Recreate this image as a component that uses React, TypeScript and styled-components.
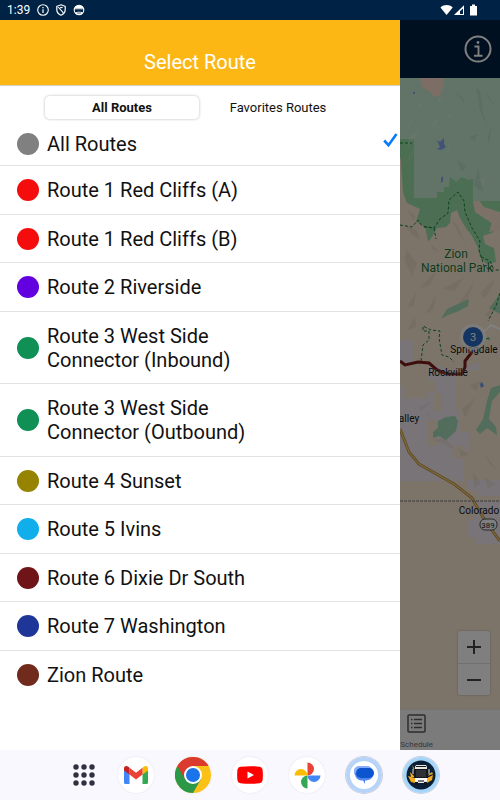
import React, { useState } from "react";
import styled, { createGlobalStyle } from "styled-components";

const Global = createGlobalStyle`
  *, *::before, *::after { box-sizing: border-box; }
  body { margin: 0; background: #faf8ff; font-family: Roboto, "Liberation Sans", sans-serif; color: #111; }
  button { font: inherit; color: inherit; border: 0; padding: 0; margin: 0; background: none; cursor: pointer; }
  svg { display: block; }
`;

const Phone = styled.div`
  display: flex;
  flex-direction: column;
  min-height: 100vh;
`;

const StatusBar = styled.header`
  display: flex;
  align-items: center;
  gap: 7px;
  height: 20px;
  padding: 0 22px 0 7px;
  background: #002345;
  color: #fff;
  font-size: 12px;
  line-height: 20px;
`;

const StatusRight = styled.div`
  display: flex;
  align-items: center;
  margin-left: auto;
`;

const Stage = styled.main`
  flex: 1;
  display: grid;
  grid-template: minmax(0, 1fr) / minmax(0, 1fr);
  & > * { grid-area: 1 / 1; }
`;

const MapScreen = styled.section`
  display: flex;
  flex-direction: column;
`;

const MapHeader = styled.div`
  display: flex;
  align-items: center;
  justify-content: flex-end;
  height: 58px;
  padding-right: 8px;
  background: #002040;
  color: #fff;
`;

const MapArea = styled.div`
  position: relative;
  flex: 1;
  background: #f9e9d4;
`;

const MapDrawing = styled.svg`
  position: absolute;
  inset: 0;
  width: 100%;
  height: 100%;
`;

const ZoomControl = styled.div`
  position: absolute;
  right: 10px;
  bottom: 14px;
  display: flex;
  flex-direction: column;
  width: 32px;
  border-radius: 2px;
  background: #fff;
  box-shadow: 0 0 2px rgba(0, 0, 0, 0.3);
`;

const ZoomButton = styled.button`
  display: grid;
  place-items: center;
  height: 32px;
  & + & { border-top: 1px solid #e0e0e0; }
`;

const TabBar = styled.nav`
  display: grid;
  grid-template-columns: repeat(3, 1fr);
  height: 41px;
  background: #f6f6f6;
  border-top: 1px solid #e4e4e4;
`;

const TabButton = styled.button`
  grid-column: 3;
  display: flex;
  flex-direction: column;
  align-items: center;
  justify-content: space-between;
  padding-top: 4px;
  color: #707070;
  font-size: 8px;
  line-height: 11px;
`;

const Scrim = styled.div`
  z-index: 1;
  background: rgba(0, 0, 0, 0.5);
`;

const Drawer = styled.aside`
  z-index: 2;
  width: 80%;
  background: #fff;
`;

const DrawerHeader = styled.div`
  display: flex;
  align-items: flex-end;
  justify-content: center;
  height: 66px;
  padding-bottom: 11px;
  background: #fdb714;
  border-bottom: 1px solid #d8d0c4;
`;

const Title = styled.h1`
  margin: 0;
  color: #fff;
  font-size: 20px;
  font-weight: 400;
  line-height: 24px;
`;

const Segments = styled.div`
  display: grid;
  grid-template-columns: 1fr 1fr;
  padding: 9px 44px 0;
`;

const Segment = styled.button<{ $active: boolean }>`
  height: 25px;
  border-radius: 6px;
  font-size: 13px;
  font-weight: ${(p) => (p.$active ? 700 : 400)};
  box-shadow: ${(p) => (p.$active ? "inset 0 0 0 1px #e6e6e6, 0 0 2px rgba(0, 0, 0, 0.16)" : "none")};
`;

const RouteList = styled.ul`
  list-style: none;
  margin: 0;
  padding: 0;
`;

const RouteItem = styled.li`
  border-bottom: 1px solid #e2e2e2;
  &:last-child { border-bottom: 0; }
`;

const RouteButton = styled.button`
  display: flex;
  align-items: center;
  gap: 8px;
  width: 100%;
  padding: 12px 2px 12px 17px;
  text-align: left;
  font-size: 20px;
  line-height: 24px;
  ${RouteItem}:nth-child(odd) & { padding-bottom: 11px; }
  ${RouteItem}:first-child & { padding-bottom: 9px; }
`;

const Dot = styled.span<{ $color: string }>`
  flex: none;
  width: 22px;
  height: 22px;
  border-radius: 50%;
  background: ${(p) => p.$color};
`;

const RouteName = styled.span`
  max-width: 220px;
`;

const CheckIcon = styled.svg`
  align-self: flex-start;
  margin-left: auto;
`;

const Dock = styled.nav`
  display: flex;
  align-items: center;
  justify-content: center;
  gap: 21px;
  height: 50px;
  padding-left: 10px;
  background: #faf8ff;
`;

const DockButton = styled.button<{ $ring?: string; $plain?: boolean }>`
  display: grid;
  place-items: center;
  flex: none;
  width: ${(p) => (p.$plain ? 26 : 36)}px;
  height: 36px;
  border-radius: 50%;
  background: ${(p) => (p.$plain ? "none" : "#fff")};
  box-shadow: ${(p) =>
    p.$ring
      ? `inset 0 0 0 4px ${p.$ring}, 0 0 0 1px #c9cdd8`
      : p.$plain
        ? "none"
        : "0 0 2px rgba(60, 50, 80, 0.14)"};
`;

const routes = [
  { name: "All Routes", color: "#808080" },
  { name: "Route 1 Red Cliffs (A)", color: "#f50c0c" },
  { name: "Route 1 Red Cliffs (B)", color: "#f50c0c" },
  { name: "Route 2 Riverside", color: "#6200e0" },
  { name: "Route 3 West Side Connector (Inbound)", color: "#109055" },
  { name: "Route 3 West Side Connector (Outbound)", color: "#109055" },
  { name: "Route 4 Sunset", color: "#968300" },
  { name: "Route 5 Ivins", color: "#10aeea" },
  { name: "Route 6 Dixie Dr South", color: "#701517" },
  { name: "Route 7 Washington", color: "#1f3699" },
  { name: "Zion Route", color: "#702b1d" },
];

const RegionMap = () => (
  <MapDrawing viewBox="0 78 500 631" preserveAspectRatio="xMaxYMin slice" role="img" aria-label="Map">
    <rect x="0" y="78" width="500" height="631" fill="#f8e8d2" />
    <path
      d="M400 386H404V398H428V392H435V380H428V368L440 366 452 371 480 362V370H455V410H460V432H470V460H464V480H500V496H478V490H468V481H400Z M400 340H414V362H400Z M476 520H468V537H476V544H500V501H476Z"
      fill="#f1e9f1"
    />
    <path d="M434 393H442V411H434Z M428 420H438V446H428Z M452 446H465V452H469V459H453Z" fill="#f8e8d2" />
    <path
      d="M400 78H500V212L489 210 482 214 474 210 475 204 480 202 478 198 473 199 474 208 484 215 493 220 490 228 494 232 483 236 485 244 494 248 496 262 487 264 480 257 478 248 472 236 466 228 460 218 457 210 451 213 450 223 446 227 437 228 430 240 428 241 425 226 416 222 420 209 407 203 403 192 401 160 400 157Z"
      fill="#98dca6"
    />
    <path d="M478 199 484 207 494 210 500 214V230L489 232 493 224 484 218 475 212 474 205Z" fill="#f8e2cf" />
    <path
      d="M400 78H500V201H473V179L468 180 462 177 456 182 450 177 449 187H444V192H437V198H414V139H400Z"
      fill="#c2e8cf"
    />
    <path d="M420 78H443V87L440 96 435 97 430 92 422 87Z" fill="#f8dbcb" />
    <path d="M437 140 440 142 444 138 444 144 446 147 441 150 437 149 440 147Z M441 178 443 176 443 181 441 183Z M413 92H415V94H413Z" fill="#84a4ef" />
    <g fill="#8fb7a2" fillOpacity="0.25">
      <path d="M468 78 476 87 480 110 488 128 483 113 480 91Z M470 137 477 134 475 141Z M478 168 483 192 474 186Z M485 92 496 106 490 100Z M455 92 462 97 466 105Z M488 136 492 124 489 144Z M457 160 466 166 462 172Z" />
    </g>
    <g fill="#fff" fillOpacity="0.18">
      <path d="M431 126 438 117 438 121 433 127Z M448 116 453 110 450 119Z M407 129 411 119 412 124Z M418 106 423 101 421 108Z M409 137 420 130 416 137 408 147Z M445 153 451 144 449 151Z M476 180 487 176 484 185Z M402 167 416 146 410 158Z M438 96 443 105 438 102Z" />
    </g>
    <g fill="#d6c2aa" fillOpacity="0.28">
      <path d="M452 220 458 226 466 244 459 235Z M408 210 416 216 413 220Z M405 225 417 230 420 240 411 234Z" />
      <path d="M407 250 417 263 412 277 404 259Z M431 244 440 252 433 250Z M419 289 438 268 430 285Z M443 289 464 277 455 291Z M454 310 475 281 466 302Z M407 307 416 292 414 306Z M480 293 496 278 485 299Z M425 314 437 294 433 310Z M485 315 498 300 490 318Z M407 330 415 316 416 327Z" />
      <path d="M419 407 432 401 421 411Z M428 413 433 418 428 416Z M462 409 476 397 465 418Z M433 440 445 438 455 450 442 443Z M458 448 470 455 461 457Z M473 473 481 483 474 488Z M484 453 498 472 490 464Z M485 477 496 484 488 489Z M470 385 481 381 476 392Z" />
    </g>
    <path
      d="M500 293 494 302 489 308 500 314Z M441 319 447 309 460 303 469 299 468 306 459 311 448 315Z M433 432 438 428 438 421 446 417 455 416 458 421 456 431 446 440 439 436 433 438Z M500 385 491 388 487 401 483 419 476 430 480 434 487 428 497 435 496 427 489 419 492 401 500 392Z M487 338 491 338 489 341Z"
      fill="#a6dab8"
    />
    <g fill="none" stroke="#1b8537" strokeWidth="1" strokeDasharray="3 2">
      <path d="M400 143H412" />
      <path d="M400 225 412 227 418 220 422 226 434 228 440 219 448 213 449 200 458 192 464 201 465 212 472 228 480 241 479 250 484 266 490 270H500" />
      <path d="M424 227 434 228 436 239" />
      <path d="M421 361 423 345 429 340 429 331 423 331 423 326 431 330 440 331 439 338 442 355 449 357 454 362" />
      <path d="M500 293 496 306 488 321M481 257 490 261 494 270M489 338 486 339" />
    </g>
    <path d="M483 332 487 329 491 325 500 329" fill="none" stroke="#fff" strokeWidth="2" />
    <path d="M400 361 405 365 418 362 429 363 437 370 447 374 462 374 465 367 465 361 472 352" fill="none" stroke="#7b1d1a" strokeWidth="3" />
    <path d="M400 429 409 452 419 464 454 484 472 498 481 514 491 529 500 541" fill="none" stroke="#c89a48" strokeWidth="3" />
    <path d="M400 429 409 452 419 464 454 484 472 498 481 514 491 529 500 541" fill="none" stroke="#ffdf90" strokeWidth="1" />
    <path d="M400 501H500" stroke="#777" strokeWidth="1" strokeDasharray="3 1" />
    <path d="M480 384 482 382 484 386 481 388Z" fill="#639af0" />
    <g fontFamily="Roboto, sans-serif" textAnchor="middle" paintOrder="stroke" stroke="#fff" strokeOpacity="0.4" strokeWidth="1">
      <g fontSize="12" fill="#1c7733">
        <text x="456" y="258">Zion</text>
        <text x="457" y="272">National Park</text>
      </g>
      <g fontSize="10" fill="#101010">
        <text x="474" y="353">Springdale</text>
        <text x="448" y="376">Rockville</text>
        <text x="409" y="422">alley</text>
        <text x="479" y="514">Colorado</text>
      </g>
    </g>
    <circle cx="473" cy="337" r="13" fill="#fff" fillOpacity="0.7" />
    <circle cx="473" cy="337" r="10" fill="#286bc4" />
    <text x="473" y="341" fontFamily="Roboto, sans-serif" fontSize="11" fill="#fff" textAnchor="middle">3</text>
    <rect x="480" y="519" width="17" height="11" rx="5" fill="#fff" stroke="#555" />
    <text x="488" y="528" fontFamily="Roboto, sans-serif" fontSize="8" fill="#222" textAnchor="middle">389</text>
  </MapDrawing>
);

const StatusIcons = () => (
  <>
    <svg width="12" height="12" viewBox="0 0 12 12" fill="none" stroke="#fff">
      <circle cx="6" cy="6" r="5.3" strokeWidth="1.1" />
      <path d="M6 5.2V9M6 3V4.2" strokeWidth="1.2" />
    </svg>
    <svg width="10" height="12" viewBox="0 0 10 12" fill="none" stroke="#fff">
      <path d="M5 .8 9.2 2.3V5.6C9.2 8.2 7.5 10.3 5 11.3 2.5 10.3.8 8.2.8 5.6V2.3Z" strokeWidth="1.2" />
      <path d="M2.2 3 7.4 8.8M6.6 3.4 4 3.8" strokeWidth="1.1" />
    </svg>
    <svg width="12" height="12" viewBox="0 0 12 12">
      <circle cx="6" cy="6" r="4.8" fill="none" stroke="#fff" strokeWidth="1.1" />
      <path d="M1.5 4.6C2.4.2 9.6.2 10.500 4.600Z" fill="#fff" />
      <path d="M.8 4.400H11.200V5.300H.8Z M2.200 8.400C4 7.400 8 7.400 9.800 8.400 8 12 4 12 2.200 8.400Z" fill="#fff" />
      <path d="M4 9H8" stroke="#002345" strokeWidth=".7" />
    </svg>
  </>
);

const SignalIcons = () => (
  <svg width="38" height="14" viewBox="0 0 38 14">
    <path d="M.5 4.400C4 1.200 9.200 1.200 12.700 4.400L6.600 12Z" fill="#fff" />
    <path d="M24 2.200V12H14Z" fill="#fff" />
    <path d="M23 5.400V11H20V8.300Z" fill="#002345" />
    <path d="M30 3H32V1.500H35V3H37V12.500H30Z" fill="#fff" />
  </svg>
);

const InfoIcon = () => (
  <svg width="28" height="28" viewBox="0 0 28 28" fill="none" stroke="currentColor">
    <circle cx="14" cy="14" r="12.5" strokeWidth="2" />
    <path d="M10.5 11.5H14.5V20.5M10 20.7H18.5" strokeWidth="1.9" />
    <circle cx="14" cy="7.5" r="1.4" fill="currentColor" stroke="none" />
  </svg>
);

const ScheduleIcon = () => (
  <svg width="19" height="19" viewBox="0 0 19 19" fill="none" stroke="#5a5a5a">
    <rect x="1" y="1" width="17" height="17" rx="1" strokeWidth="1.5" />
    <path d="M7 5.5H15M7 9.5H15M7 13.5H15M4 5.5H5.5M4 9.5H5.5M4 13.5H5.5" strokeWidth="1.3" />
  </svg>
);

const AppsIcon = () => (
  <svg width="24" height="24" viewBox="0 0 24 24" fill="#303040">
    {[4, 12, 20].map((y) => [4, 12, 20].map((x) => <circle key={`${x}-${y}`} cx={x} cy={y} r="2.7" />))}
  </svg>
);

const MailIcon = () => (
  <svg width="26" height="20" viewBox="0 0 26 20">
    <path d="M1 5V17.5Q1 19 2.5 19H6.5V8Z" fill="#4285f4" />
    <path d="M25 5V17.5Q25 19 23.5 19H19.5V8Z" fill="#34a853" />
    <path d="M19.5 2.8V9.5L25 5.5V3.5C25 1 22.5.4 21 1.6Z" fill="#fbbc04" />
    <path d="M6.5 2.8 13 7.7 19.5 2.8V9.5L13 14.5 6.5 9.5Z" fill="#ea4335" />
    <path d="M1 3.5V5.5L6.5 9.5V2.8L5 1.6C3.5.4 1 1 1 3.5Z" fill="#c5221f" />
  </svg>
);

const ChromeIcon = () => (
  <svg width="36" height="36" viewBox="0 0 36 36">
    <circle cx="18" cy="18" r="18" fill="#fbc116" />
    <path d="M18 18 25.8 22.5 18 36A18 18 0 0 1 2.4 9Z" fill="#2b9847" />
    <path d="M18 9H33.6A18 18 0 0 0 2.4 9L10.2 22.5Z" fill="#db3b2e" />
    <circle cx="18" cy="18" r="9" fill="#fff" />
    <circle cx="18" cy="18" r="7" fill="#1a73e8" />
  </svg>
);

const VideoIcon = () => (
  <svg width="26" height="18" viewBox="0 0 26 18">
    <path d="M3.5.7Q13-.4 22.5.7 25 1 25.5 3.5 26.3 9 25.5 14.5 25 17 22.5 17.3 13 18.4 3.5 17.3 1 17 .5 14.5-.3 9 .5 3.5 1 1 3.5.7Z" fill="#f00" />
    <path d="M10.500 5.500 17 9 10.500 12.500Z" fill="#fff" />
  </svg>
);

const PhotosIcon = () => (
  <svg width="27" height="27" viewBox="0 0 27 27">
    <path d="M13.5.5A6.5 6.5 0 0 1 13.5 13.5Z" fill="#ea4335" />
    <path d="M26.5 13.5A6.5 6.5 0 0 1 13.5 13.5Z" fill="#4285f4" />
    <path d="M13.5 26.5A6.5 6.5 0 0 1 13.5 13.5Z" fill="#34a853" />
    <path d="M.5 13.5A6.5 6.5 0 0 1 13.5 13.5Z" fill="#fbbc04" />
  </svg>
);

const MessagesIcon = () => (
  <svg width="20" height="20" viewBox="0 0 20 20">
    <path d="M5.500 1H14A4.500 4.500 0 0 1 18 6V12H5A5.500 5.500 0 0 1 5.500 1Z" fill="#85adfa" />
    <path d="M1 8C1 14 5 15.500 9 15.500L11 19V15.500C15 15.500 19 13.500 19.500 9Z" fill="#4f86ef" />
    <rect x="2" y="3" width="18" height="10" rx="5" fill="#0c55cf" />
  </svg>
);

const BusIcon = () => (
  <svg width="30" height="30" viewBox="0 0 30 30">
    <circle cx="15" cy="15" r="14.5" fill="#0b2036" />
    <path d="M6 5 10 11V16Z M2 16 9 18 9 23 5 22Z M4 12 9 17H5Z M21 18 27 15 26 20 21 23Z M21 16 26 12 27 14Z" fill="#f7a91e" />
    <path d="M9 7 10 5H20L21 7V23H9Z" fill="#e9e7e1" />
    <path d="M10 6H20V7H10Z M8 9H22V18H8Z M9 22H12V25H9Z M18 22H21V25H18Z" fill="#15161a" />
    <path d="M10 10H20V17H10Z" fill="#2e3136" />
    <path d="M9 18H21V21H9Z" fill="#fff" />
    <path d="M12 20H18V22H12Z" fill="#777" />
    <path d="M7 9V14M23 9V14" stroke="#ddd" strokeWidth="1" />
  </svg>
);

export default function App() {
  const [tab, setTab] = useState("All Routes");
  const [selected, setSelected] = useState("All Routes");

  return (
    <Phone>
      <Global />
      <StatusBar>
        <span>1:39</span>
        <StatusIcons />
        <StatusRight>
          <SignalIcons />
        </StatusRight>
      </StatusBar>
      <Stage>
        <MapScreen>
          <MapHeader>
            <button type="button" aria-label="Information">
              <InfoIcon />
            </button>
          </MapHeader>
          <MapArea>
            <RegionMap />
            <ZoomControl>
              <ZoomButton type="button" aria-label="Zoom in">
                <svg width="14" height="14" viewBox="0 0 14 14" stroke="#444" strokeWidth="2">
                  <path d="M0 7H14M7 0V14" />
                </svg>
              </ZoomButton>
              <ZoomButton type="button" aria-label="Zoom out">
                <svg width="14" height="14" viewBox="0 0 14 14" stroke="#444" strokeWidth="2">
                  <path d="M0 7H14" />
                </svg>
              </ZoomButton>
            </ZoomControl>
          </MapArea>
          <TabBar>
            <TabButton type="button">
              <ScheduleIcon />
              Schedule
            </TabButton>
          </TabBar>
        </MapScreen>
        <Scrim />
        <Drawer>
          <DrawerHeader>
            <Title>Select Route</Title>
          </DrawerHeader>
          <Segments role="tablist">
            {["All Routes", "Favorites Routes"].map((label) => (
              <Segment
                key={label}
                type="button"
                role="tab"
                aria-selected={tab === label}
                $active={tab === label}
                onClick={() => setTab(label)}
              >
                {label}
              </Segment>
            ))}
          </Segments>
          <RouteList>
            {routes.map((route) => (
              <RouteItem key={route.name}>
                <RouteButton type="button" aria-pressed={selected === route.name} onClick={() => setSelected(route.name)}>
                  <Dot $color={route.color} />
                  <RouteName>{route.name}</RouteName>
                  {selected === route.name && (
                    <CheckIcon width="15" height="16" viewBox="0 0 15 16" fill="none" stroke="#087cfa" strokeWidth="2.6">
                      <path d="M1.2 8.5 5.5 13.2 13.5 2" />
                    </CheckIcon>
                  )}
                </RouteButton>
              </RouteItem>
            ))}
          </RouteList>
        </Drawer>
      </Stage>
      <Dock>
        <DockButton type="button" aria-label="All apps" $plain>
          <AppsIcon />
        </DockButton>
        <DockButton type="button" aria-label="Gmail">
          <MailIcon />
        </DockButton>
        <DockButton type="button" aria-label="Chrome">
          <ChromeIcon />
        </DockButton>
        <DockButton type="button" aria-label="YouTube">
          <VideoIcon />
        </DockButton>
        <DockButton type="button" aria-label="Photos">
          <PhotosIcon />
        </DockButton>
        <DockButton type="button" aria-label="Messages" $ring="#b6d3fa">
          <MessagesIcon />
        </DockButton>
        <DockButton type="button" aria-label="Transit" $ring="#a5d6fa">
          <BusIcon />
        </DockButton>
      </Dock>
    </Phone>
  );
}
